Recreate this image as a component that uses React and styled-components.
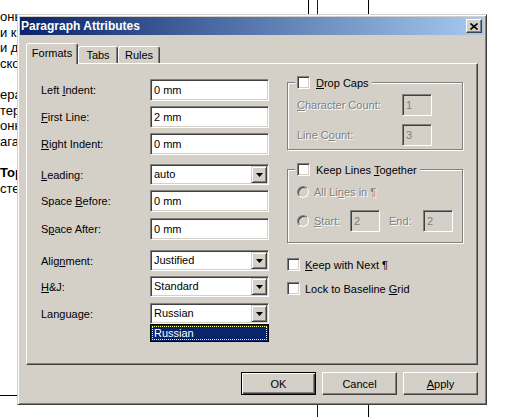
import React from "react";
import styled, { createGlobalStyle } from "styled-components";

const GlobalStyle = createGlobalStyle`
  html, body { margin: 0; padding: 0; background: #fff; }
  body { font-family: "Liberation Sans", Arial, sans-serif; }
`;

const Screen = styled.div`
  position: relative;
  width: 507px;
  height: 417px;
  overflow: hidden;
  background: #fff;
`;

// the part of the document page that is not covered by the dialog
const DocText = styled.div`
  width: 17px;
  overflow: hidden;
  padding-top: 9px;
  font-size: 13px;
  color: #000;
  white-space: pre;
`;

const DocLine = styled.div`
  height: 15.6px;
  line-height: 15.6px;
  font-weight: ${p => (p.$bold ? 700 : 400)};
`;

// guide lines of the document page, lying under the dialog
const Guide = styled.div`
  position: absolute;
  left: ${p => p.$x}px;
  top: ${p => p.$y ?? 0}px;
  width: ${p => p.$w ?? 1}px;
  height: ${p => p.$h ?? 417}px;
  background: ${p => p.$color ?? "#000"};
`;

const Window = styled.div`
  position: absolute;
  left: 17px;
  top: 14px;
  width: 470px;
  height: 391px;
  box-sizing: border-box;
  background: #d4d0c8;
  border: 1px solid;
  border-color: #d4d0c8 #404040 #404040 #d4d0c8;
  box-shadow: inset 1px 1px 0 #fff, inset -1px -1px 0 #808080;
  padding: 2px;
  display: flex;
  flex-direction: column;
  font-family: "Liberation Sans", Arial, sans-serif;
  font-size: 11px;
  color: #000;
`;

const TitleBar = styled.div`
  height: 18px;
  display: flex;
  align-items: center;
  justify-content: space-between;
  padding: 0 2px 0 1px;
  background: linear-gradient(to right, #0a246a, #a6caf0);
`;

const Title = styled.span`
  color: #fff;
  font-weight: 700;
  font-size: 12px;
`;

const CloseButton = styled.div`
  width: 16px;
  height: 14px;
  box-sizing: border-box;
  background: #d4d0c8;
  border: 1px solid;
  border-color: #fff #404040 #404040 #fff;
  box-shadow: inset -1px -1px 0 #808080;
  display: flex;
  align-items: center;
  justify-content: center;
`;

const Body = styled.div`
  padding: 8px 6px 0 6px;
  display: flex;
  flex-direction: column;
`;

const TabRow = styled.div`
  height: 20px;
  display: flex;
  align-items: flex-end;
  position: relative;
  z-index: 1;
`;

const Tab = styled.div`
  height: ${p => (p.$active ? 21 : 17)}px;
  width: ${p => p.$w}px;
  box-sizing: border-box;
  margin-bottom: ${p => (p.$active ? -1 : 0)}px;
  background: #d4d0c8;
  border: 1px solid;
  border-bottom: none;
  border-color: #fff #404040 transparent #fff;
  border-radius: 3px 3px 0 0;
  box-shadow: inset -1px 0 0 #808080;
  display: flex;
  align-items: ${p => (p.$active ? "flex-start" : "center")};
  padding-top: ${p => (p.$active ? 3 : 0)}px;
  justify-content: center;
`;

const Panel = styled.div`
  height: 302px;
  box-sizing: border-box;
  border: 1px solid;
  border-color: #fff #404040 #404040 #fff;
  box-shadow: inset -1px -1px 0 #808080;
  display: flex;
  padding: 15px 0 0 14px;
`;

const LeftColumn = styled.div`
  width: 228px;
  display: flex;
  flex-direction: column;
`;

const FieldRow = styled.div`
  display: flex;
  align-items: center;
  margin-top: ${p => p.$mt || 0}px;
`;

const Label = styled.div`
  width: 109px;
`;

const TextBox = styled.div`
  width: ${p => p.$w || 119}px;
  height: 22px;
  box-sizing: border-box;
  flex-shrink: 0;
  border: 1px solid;
  border-color: #808080 #fff #fff #808080;
  box-shadow: inset 1px 1px 0 #404040, inset -1px -1px 0 #d4d0c8;
  background: ${p => (p.$disabled ? "#d4d0c8" : "#fff")};
  color: ${p => (p.$disabled ? "#808080" : "#000")};
  padding: 2px 0 0 3px;
  line-height: 16px;
`;

const SelectWrap = styled.div`
  position: relative;
`;

const Select = styled.div`
  width: 119px;
  height: 21px;
  box-sizing: border-box;
  border: 1px solid;
  border-color: #808080 #fff #fff #808080;
  box-shadow: inset 1px 1px 0 #404040, inset -1px -1px 0 #d4d0c8;
  background: #fff;
  padding: 1px;
  display: flex;
  align-items: stretch;
`;

const SelectValue = styled.div`
  flex: 1;
  padding-left: 2px;
  line-height: 17px;
`;

const DropButton = styled.div`
  width: 16px;
  box-sizing: border-box;
  background: #d4d0c8;
  border: 1px solid;
  border-color: #d4d0c8 #404040 #404040 #d4d0c8;
  box-shadow: inset 1px 1px 0 #fff, inset -1px -1px 0 #808080;
  display: flex;
  align-items: center;
  justify-content: center;
`;

const DropList = styled.div`
  position: absolute;
  left: 0;
  top: 100%;
  width: 119px;
  height: 18px;
  box-sizing: border-box;
  border: 1px solid #000;
  background: #0a246a;
  padding: 1px;
`;

const DropItem = styled.div`
  height: 100%;
  box-sizing: border-box;
  border: 1px dotted #ffff80;
  color: #fff;
  line-height: 12px;
  padding-left: 1px;
`;

const RightColumn = styled.div`
  width: 176px;
  margin-left: 18px;
  padding-top: 3px;
  display: flex;
  flex-direction: column;
`;

const Group = styled.div`
  position: relative;
  height: ${p => p.$h}px;
  margin-top: ${p => p.$mt || 0}px;
  box-sizing: border-box;
  border: 1px solid #808080;
  box-shadow: inset 1px 1px 0 #fff, 1px 1px 0 #fff;
  padding: ${p => p.$pt}px 0 0 9px;
`;

const Legend = styled.div`
  position: absolute;
  top: -7px;
  left: 7px;
  padding: 0 3px 0 2px;
  background: #d4d0c8;
  display: flex;
  align-items: center;
  gap: 6px;
  height: 13px;
`;

const GroupRow = styled.div`
  display: flex;
  align-items: center;
  height: ${p => p.$h || 22}px;
  margin-top: ${p => p.$mt || 0}px;
`;

const Disabled = styled.span`
  color: #808080;
  text-shadow: 1px 1px 0 #fff;
  width: ${p => (p.$w ? `${p.$w}px` : "auto")};
  margin-left: ${p => p.$ml || 0}px;
  flex-shrink: 0;
`;

const CheckBox = styled.span`
  width: 13px;
  height: 13px;
  box-sizing: border-box;
  flex-shrink: 0;
  border: 1px solid;
  border-color: #808080 #fff #fff #808080;
  box-shadow: inset 1px 1px 0 #404040, inset -1px -1px 0 #d4d0c8;
  background: #fff;
`;

const Radio = styled.span`
  width: 12px;
  height: 12px;
  box-sizing: border-box;
  flex-shrink: 0;
  border-radius: 50%;
  border: 1px solid;
  border-color: #808080 #fff #fff #808080;
  box-shadow: inset 1px 1px 0 #404040, inset -1px -1px 0 #d4d0c8;
  background: #d4d0c8;
  margin-right: 5px;
`;

const CheckRow = styled.div`
  display: flex;
  align-items: center;
  gap: 5px;
  height: 13px;
  margin-top: ${p => p.$mt || 0}px;
`;

const ButtonRow = styled.div`
  display: flex;
  justify-content: flex-end;
  gap: 6px;
  margin-top: 7px;
`;

const Button = styled.div`
  width: 75px;
  height: 23px;
  box-sizing: border-box;
  background: #d4d0c8;
  border: 1px solid;
  border-color: ${p => (p.$default ? "#000" : "#fff #404040 #404040 #fff")};
  box-shadow: ${p =>
    p.$default
      ? "inset 1px 1px 0 #fff, inset -1px -1px 0 #404040, inset -2px -2px 0 #808080"
      : "inset -1px -1px 0 #808080"};
  display: flex;
  align-items: center;
  justify-content: center;
`;

const Arrow = () => (
  <svg width="7" height="4" viewBox="0 0 7 4">
    <path d="M0 0h7L3.5 4z" fill="#000" />
  </svg>
);

const CloseGlyph = () => (
  <svg width="8" height="7" viewBox="0 0 8 7">
    <path d="M0.5 0.5L7.5 6.5M7.5 0.5L0.5 6.5" stroke="#000" strokeWidth="1.6" />
  </svg>
);

const docLines = [
  ["онька"], ["и кра"], ["и дол"], ["ского"], [""],
  ["ерати"], ["терив"], ["онных"], ["агали"], [""],
  ["Тори", true], ["стема"],
];

const SelectField = ({ value, open }) => (
  <SelectWrap>
    <Select>
      <SelectValue>{value}</SelectValue>
      <DropButton><Arrow /></DropButton>
    </Select>
    {open && (
      <DropList>
        <DropItem>{value}</DropItem>
      </DropList>
    )}
  </SelectWrap>
);

export default function App() {
  return (
    <Screen>
      <GlobalStyle />
      <DocText>
        {docLines.map(([t, b], i) => (
          <DocLine key={i} $bold={b}>{t}</DocLine>
        ))}
      </DocText>
      <Guide $x={308} $h={14} />
      <Guide $x={317} $color="#0000ff" />
      <Guide $x={368} />
      <Guide $x={0} $y={395} $w={40} $h={1} />

      <Window>
        <TitleBar>
          <Title>Paragraph Attributes</Title>
          <CloseButton><CloseGlyph /></CloseButton>
        </TitleBar>
        <Body>
          <TabRow>
            <Tab $active $w={52}>Formats</Tab>
            <Tab $w={40}>Tabs</Tab>
            <Tab $w={42}>Rules</Tab>
          </TabRow>
          <Panel>
            <LeftColumn>
              <FieldRow>
                <Label>Left <u>I</u>ndent:</Label>
                <TextBox>0 mm</TextBox>
              </FieldRow>
              <FieldRow $mt={5}>
                <Label><u>F</u>irst Line:</Label>
                <TextBox>2 mm</TextBox>
              </FieldRow>
              <FieldRow $mt={5}>
                <Label><u>R</u>ight Indent:</Label>
                <TextBox>0 mm</TextBox>
              </FieldRow>
              <FieldRow $mt={9}>
                <Label><u>L</u>eading:</Label>
                <SelectField value="auto" />
              </FieldRow>
              <FieldRow $mt={5}>
                <Label>Space <u>B</u>efore:</Label>
                <TextBox>0 mm</TextBox>
              </FieldRow>
              <FieldRow $mt={6}>
                <Label>S<u>p</u>ace After:</Label>
                <TextBox>0 mm</TextBox>
              </FieldRow>
              <FieldRow $mt={10}>
                <Label>Alig<u>n</u>ment:</Label>
                <SelectField value="Justified" />
              </FieldRow>
              <FieldRow $mt={5}>
                <Label><u>H</u>&amp;J:</Label>
                <SelectField value="Standard" />
              </FieldRow>
              <FieldRow $mt={6}>
                <Label>Lan<u>g</u>uage:</Label>
                <SelectField value="Russian" open />
              </FieldRow>
            </LeftColumn>

            <RightColumn>
              <Group $h={68} $pt={11}>
                <Legend>
                  <CheckBox />
                  <span><u>D</u>rop Caps</span>
                </Legend>
                <GroupRow>
                  <Disabled $w={105}><u>C</u>haracter Count:</Disabled>
                  <TextBox $w={30} $disabled>1</TextBox>
                </GroupRow>
                <GroupRow $mt={8}>
                  <Disabled $w={105}>Line C<u>o</u>unt:</Disabled>
                  <TextBox $w={30} $disabled>3</TextBox>
                </GroupRow>
              </Group>

              <Group $h={74} $mt={19} $pt={13}>
                <Legend>
                  <CheckBox />
                  <span>Keep Lines <u>T</u>ogether</span>
                </Legend>
                <GroupRow $h={18}>
                  <Radio />
                  <Disabled>All Li<u>n</u>es in ¶</Disabled>
                </GroupRow>
                <GroupRow $mt={9}>
                  <Radio />
                  <Disabled $w={36}><u>S</u>tart:</Disabled>
                  <TextBox $w={30} $disabled>2</TextBox>
                  <Disabled $w={34} $ml={9}>End:</Disabled>
                  <TextBox $w={30} $disabled>2</TextBox>
                </GroupRow>
              </Group>

              <CheckRow $mt={15}>
                <CheckBox />
                <span><u>K</u>eep with Next ¶</span>
              </CheckRow>
              <CheckRow $mt={11}>
                <CheckBox />
                <span>Lock to Baseline <u>G</u>rid</span>
              </CheckRow>
            </RightColumn>
          </Panel>
          <ButtonRow>
            <Button $default>OK</Button>
            <Button>Cancel</Button>
            <Button><u>A</u>pply</Button>
          </ButtonRow>
        </Body>
      </Window>
    </Screen>
  );
}
